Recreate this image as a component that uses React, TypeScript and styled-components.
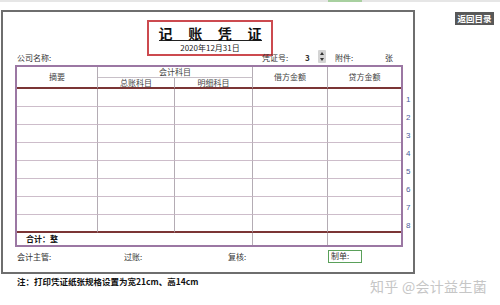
import React from 'react';
import styled, { createGlobalStyle } from 'styled-components';

const GlobalStyle = createGlobalStyle`
  html, body {
    margin: 0;
    padding: 0;
    background: #fff;
  }
  body {
    font-family: "Noto Sans CJK SC", "Liberation Sans", sans-serif;
    color: #333;
  }
`;

const Page = styled.div`
  width: 500px;
  height: 305px;
  overflow: hidden;
`;

const TopStrip = styled.div`
  display: flex;
  height: 2px;
  background: #e6e6e6;
`;

const StripMark = styled.div`
  margin-left: 328px;
  width: 34px;
  background: #a8d0a0;
`;

const MainRow = styled.div`
  display: flex;
  align-items: flex-start;
  margin-top: 8px;
  padding-left: 1px;
`;

const Sheet = styled.div`
  box-sizing: border-box;
  width: 414px;
  height: 264px;
  border: 2px solid #6e6e6e;
  display: flex;
  flex-direction: column;
`;

const BackButton = styled.button`
  margin: 2px 0 0 40px;
  width: 39px;
  height: 13px;
  padding: 0;
  border: none;
  background: #585858;
  color: #fff;
  font-family: "Noto Sans CJK SC", sans-serif;
  font-size: 8.5px;
  line-height: 13px;
  font-weight: bold;
`;

const TitleBox = styled.div`
  box-sizing: border-box;
  margin: 8px 0 0 144px;
  width: 126px;
  height: 36px;
  border: 2px solid #cc4a4f;
  display: flex;
  flex-direction: column;
  align-items: center;
  padding-top: 4px;
`;

const TitleText = styled.div`
  display: flex;
  justify-content: space-between;
  width: 103px;
  font-size: 14px;
  line-height: 14px;
  font-weight: bold;
  color: #111;
  border-bottom: 1px solid #222;
`;

const DateText = styled.div`
  margin-top: 2px;
  font-size: 8px;
  line-height: 10px;
  color: #222;
`;

const InfoRow = styled.div`
  display: flex;
  align-items: flex-end;
  height: 13px;
  margin-top: -6px;
  padding-left: 14px;
  font-size: 8px;
  line-height: 10px;
`;

const Label = styled.span<{ $w?: number; $bold?: boolean }>`
  display: inline-block;
  width: ${(p) => (p.$w ? `${p.$w}px` : 'auto')};
  font-weight: ${(p) => (p.$bold ? 'bold' : 'normal')};
  color: #333;
  white-space: nowrap;
`;

const Spinner = styled.div`
  display: flex;
  flex-direction: column;
  width: 8px;
  height: 13px;
  margin-right: 9px;
  background: #d4d4d4;
  border-radius: 1px;
`;

const SpinHalf = styled.div<{ $down?: boolean }>`
  flex: 1;
  display: flex;
  align-items: center;
  justify-content: center;
  &::after {
    content: '';
    border-left: 2px solid transparent;
    border-right: 2px solid transparent;
    ${(p) =>
      p.$down ? 'border-top: 3px solid #333;' : 'border-bottom: 3px solid #333;'}
  }
`;

const TableRow = styled.div`
  display: flex;
  margin: 2px 0 0 12px;
`;

const Grid = styled.div`
  box-sizing: border-box;
  width: 388px;
  border: 2px solid #9b77a3;
  display: grid;
  grid-template-columns: 81px 77px 78px 75px 1fr;
  grid-template-rows: 11px 11px repeat(8, 18px) 12px;
`;

type Line = 'light' | 'dark' | 'sub' | 'none';

const lineColor: Record<Line, string> = {
  light: '1px solid #cdbdca',
  dark: '2px solid #7b3535',
  sub: '1px solid #c8c0c8',
  none: 'none',
};

const Cell = styled.div<{
  $col?: string;
  $row?: string;
  $bottom?: Line;
  $last?: boolean;
  $align?: 'center' | 'left';
  $bold?: boolean;
}>`
  box-sizing: border-box;
  grid-column: ${(p) => p.$col || 'auto'};
  grid-row: ${(p) => p.$row || 'auto'};
  border-right: ${(p) => (p.$last ? 'none' : '1px solid #b4acb4')};
  border-bottom: ${(p) => lineColor[p.$bottom || 'light']};
  display: flex;
  align-items: center;
  justify-content: ${(p) => (p.$align === 'left' ? 'flex-start' : 'center')};
  padding-left: ${(p) => (p.$align === 'left' ? '9px' : '0')};
  font-size: 8px;
  line-height: 10px;
  font-weight: ${(p) => (p.$bold ? 'bold' : 'normal')};
  color: ${(p) => (p.$bold ? '#111' : '#444')};
  white-space: nowrap;
`;

const Numbers = styled.div`
  display: flex;
  flex-direction: column;
  padding: 25px 0 0 3px;
`;

const RowNum = styled.div`
  height: 18px;
  display: flex;
  align-items: center;
  font-family: "Liberation Sans", sans-serif;
  font-size: 8px;
  color: #4b5b9b;
`;

const FooterRow = styled.div`
  display: flex;
  align-items: center;
  height: 13px;
  margin-top: 3px;
  padding-left: 14px;
  font-size: 8px;
  line-height: 10px;
`;

const MakerBox = styled.div`
  box-sizing: border-box;
  width: 34px;
  height: 13px;
  border: 1.5px solid #5aa05a;
  padding-left: 2px;
  font-size: 8px;
  line-height: 10px;
  color: #333;
`;

const BottomRow = styled.div`
  display: flex;
  align-items: flex-start;
  justify-content: space-between;
  padding: 0 13px 0 17px;
`;

const Note = styled.div`
  margin-top: 1px;
  font-size: 8.5px;
  line-height: 12px;
  font-weight: bold;
  color: #111;
`;

const Watermark = styled.div`
  margin-top: 3px;
  font-size: 14px;
  line-height: 18px;
  color: #c6c6c6;
  letter-spacing: 0.3px;
`;

const bodyRows = Array.from({ length: 8 }, (_, i) => i);
const cols = [0, 1, 2, 3, 4];

const App: React.FC = () => {
  return (
    <Page>
      <GlobalStyle />
      <TopStrip>
        <StripMark />
      </TopStrip>
      <MainRow>
        <Sheet>
          <TitleBox>
            <TitleText>
              <span>记</span>
              <span>账</span>
              <span>凭</span>
              <span>证</span>
            </TitleText>
            <DateText>2020年12月31日</DateText>
          </TitleBox>
          <InfoRow>
            <Label $w={245}>公司名称:</Label>
            <Label $w={43}>凭证号:</Label>
            <Label $w={13} $bold>3</Label>
            <Spinner>
              <SpinHalf />
              <SpinHalf $down />
            </Spinner>
            <Label $w={50}>附件:</Label>
            <Label>张</Label>
          </InfoRow>
          <TableRow>
            <Grid>
              <Cell $col="1" $row="1 / 3" $bottom="dark">摘要</Cell>
              <Cell $col="2 / 4" $row="1" $bottom="sub">会计科目</Cell>
              <Cell $col="2" $row="2" $bottom="dark">总账科目</Cell>
              <Cell $col="3" $row="2" $bottom="dark">明细科目</Cell>
              <Cell $col="4" $row="1 / 3" $bottom="dark">借方金额</Cell>
              <Cell $col="5" $row="1 / 3" $bottom="dark" $last>贷方金额</Cell>
              {bodyRows.map((r) =>
                cols.map((c) => (
                  <Cell
                    key={`${r}-${c}`}
                    $bottom={r === 7 ? 'dark' : 'light'}
                    $last={c === 4}
                  />
                ))
              )}
              <Cell $col="1 / 4" $bottom="none" $align="left" $bold>
                合计：整
              </Cell>
              <Cell $bottom="none" />
              <Cell $bottom="none" $last />
            </Grid>
            <Numbers>
              {bodyRows.map((r) => (
                <RowNum key={r}>{r + 1}</RowNum>
              ))}
            </Numbers>
          </TableRow>
          <FooterRow>
            <Label $w={107}>会计主管:</Label>
            <Label $w={104}>过账:</Label>
            <Label $w={100}>复核:</Label>
            <MakerBox>制单:</MakerBox>
          </FooterRow>
        </Sheet>
        <BackButton>返回目录</BackButton>
      </MainRow>
      <BottomRow>
        <Note>注：打印凭证纸张规格设置为宽21cm、高14cm</Note>
        <Watermark>知乎 @会计益生菌</Watermark>
      </BottomRow>
    </Page>
  );
};

export default App;
